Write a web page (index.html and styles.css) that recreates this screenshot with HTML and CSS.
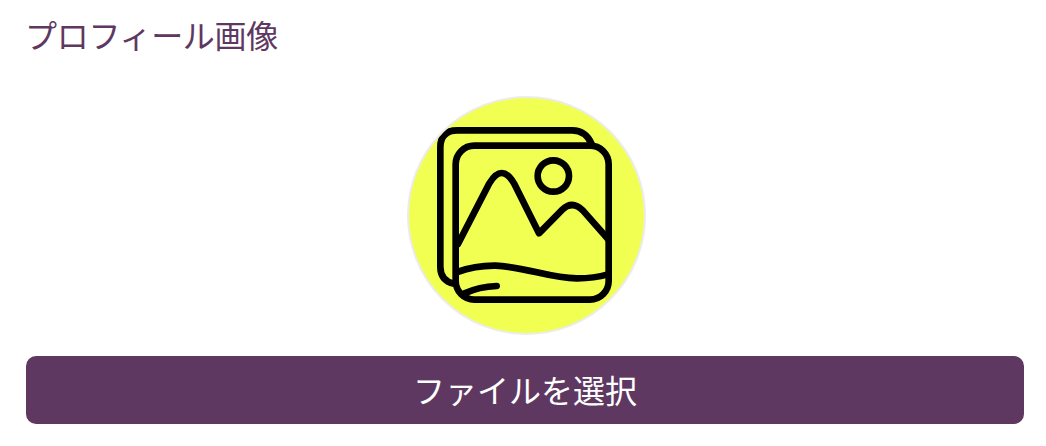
FILE: index.html
```html
<!DOCTYPE html>
<html lang="ja">
<head>
<meta charset="utf-8">
<title>プロフィール画像</title>
<link rel="stylesheet" href="styles.css">
</head>
<body>
<section class="field">
  <h2 class="label">プロフィール画像</h2>
  <div class="avatar">
    <svg class="avatar-icon" viewBox="25 24 705 705" aria-hidden="true">
      <g fill="none" stroke="#000" stroke-width="20" stroke-linecap="round" stroke-linejoin="round">
        <rect x="165" y="167" width="459" height="462" rx="56"/>
        <path d="M573 162 Q555 121 515 121 H170 Q119 121 119 172 V530 Q119 572 160 581"/>
        <path d="M172 462 L266 280 Q303 218 340 280 L415 430 L485 359 Q515 330 547 362 L622 447"/>
        <circle cx="458" cy="258" r="47"/>
        <path d="M170 546 Q225 526 285 527 C375 530 450 566 530 565 Q580 565 622 553"/>
        <path d="M192 610 Q235 590 288 588"/>
      </g>
    </svg>
  </div>
  <button class="file-button" type="button">ファイルを選択</button>
</section>
</body>
</html>
```
FILE: styles.css
```css
html, body {
  margin: 0;
  padding: 0;
  background: #fff;
}

.field {
  display: flex;
  flex-direction: column;
  padding: 11px 22px 0 26px;
  font-family: "Noto Sans CJK JP", "Noto Sans", sans-serif;
}

.label {
  margin: 0 0 0 -1px;
  font-size: 32px;
  font-weight: 400;
  line-height: 46px;
  letter-spacing: -0.3px;
  color: #5e3861;
}

.avatar {
  box-sizing: border-box;
  align-self: center;
  width: 239px;
  height: 239px;
  margin: 39px 0 21px 2px;
  border: 2px solid #ececec;
  border-radius: 50%;
  background: #f0ff52;
  overflow: hidden;
}

.avatar-icon {
  display: block;
  width: 100%;
  height: 100%;
}

.file-button {
  box-sizing: border-box;
  height: 68px;
  padding: 0 0 3px;
  border: 0;
  border-radius: 10px;
  background: #5e3861;
  color: #fff;
  font: inherit;
  font-size: 32px;
}
```
